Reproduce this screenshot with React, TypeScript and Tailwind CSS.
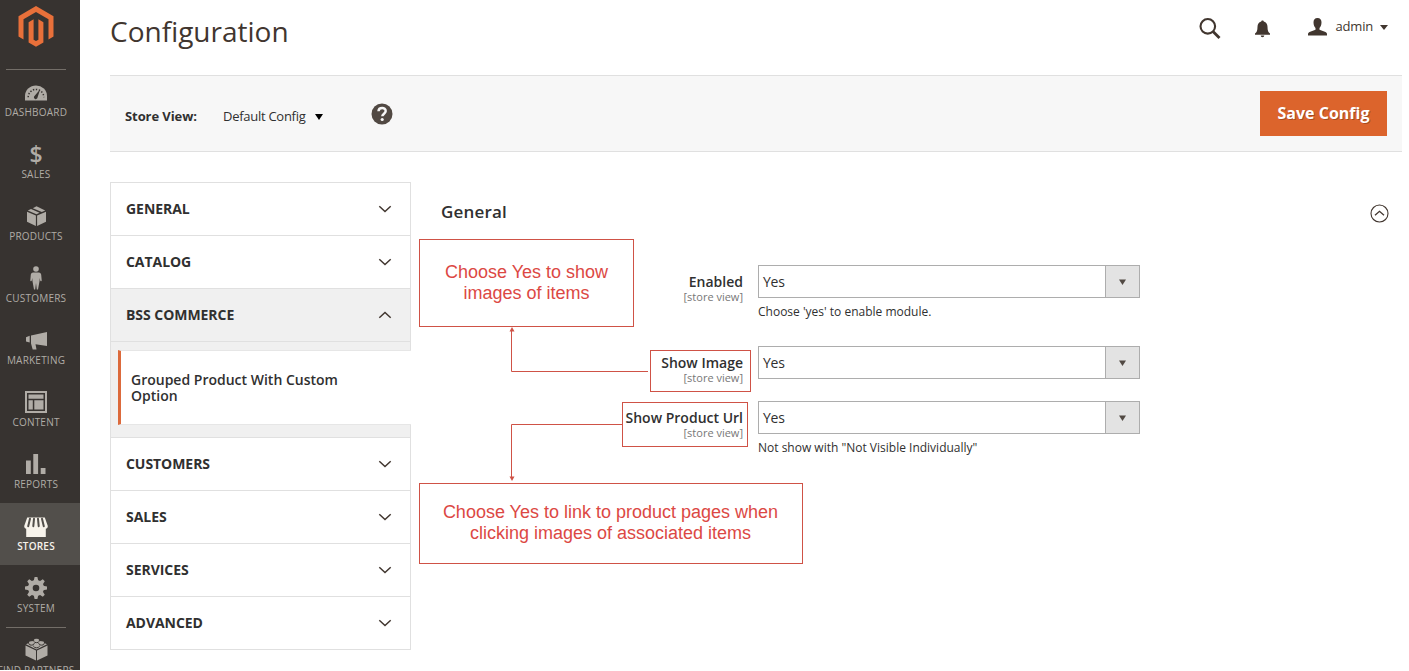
import React from "react";

const icons: Record<string, React.ReactNode> = {
  dashboard: (
    <svg width="22" height="16" viewBox="0 0 22 16">
      <path d="M0 15.5V11a11 10.5 0 0 1 22 0v4.5z" fill="currentColor" />
      <path d="M3.200 12.200a7.800 7.800 0 0 1 15.600 0" fill="none" stroke="#373330" strokeWidth="1.500" strokeDasharray="1.400 1.600" />
      <path d="M15.200 4.200l-2.700 8.200a1.800 1.800 0 1 1-3-1.400z" fill="#373330" />
    </svg>
  ),
  products: (
    <svg width="19" height="20" viewBox="0 0 19 20" fill="currentColor">
      <path d="M0 5.800l8.900 3.600V20L0 15.800z" />
      <path d="M19 5.800l-8.900 3.600V20l8.900-4.200z" />
      <path d="M.8 4.500l3.200-1.500 8.600 3.700-3.100 1.500z" />
      <path d="M5.800 2.200L9.500.3l8.700 4.200-3.400 1.400z" />
    </svg>
  ),
  customers: (
    <svg width="12" height="24" viewBox="0 0 12 24" fill="currentColor">
      <circle cx="6" cy="3" r="2.800" />
      <path d="M3.200 6.500h5.600c1.500 0 2.300 1 2.400 2.300l.5 5.400c.1 1.300-1.300 1.400-1.500.4L9.800 12l-.3 3.200L8 23.500H6.800L6 17l-.8 6.500H4L2.500 15.200 2.200 12l-.4 2.600c-.2 1-1.600.9-1.500-.4l.5-5.400C.9 7.500 1.700 6.500 3.200 6.500z" />
    </svg>
  ),
  marketing: (
    <svg width="21" height="18" viewBox="0 0 21 18" fill="currentColor">
      <path d="M21 0v14L9.500 12.200l1 5.300H6.700L5 11.600V3.400z" />
      <path d="M0 5.200l3.700-1.500v6.800L0 9.600z" />
    </svg>
  ),
  content: (
    <svg width="22" height="22" viewBox="0 0 22 22" fill="currentColor">
      <path d="M0 0h22v22H0zM2 2v18h18V2z" fillRule="evenodd" />
      <path d="M3.500 3.500h15v4.300h-15zM3.500 9.300h4.300v9.200H3.500zM9.300 9.300h9.200v9.200H9.300z" />
    </svg>
  ),
  reports: (
    <svg width="20" height="20" viewBox="0 0 20 20" fill="currentColor">
      <path d="M0 6.500h4.800V20H0zM7.300 0h4.800v20H7.300zM14.700 14h4.800v6h-4.800z" />
    </svg>
  ),
  stores: (
    <svg width="24" height="20" viewBox="0 0 24 20" fill="currentColor">
      <path d="M3.200.5h17.600l3 8.500c0 1.800-1 2.700-2 2.700V20H2.200v-8.300c-1 0-2-.9-2-2.700z" />
      <path d="M6 1.800L4.200 9.200M10 1.800L9.300 9.200M14 1.800l.7 7.400M18 1.800l1.800 7.400" stroke="#524f4b" strokeWidth="2" strokeLinecap="round" />
    </svg>
  ),
  system: (
    <svg width="22" height="22" viewBox="0 0 22 22">
      <g fill="currentColor">
        <path fillRule="evenodd" d="M11 3a8 8 0 1 0 0 16 8 8 0 0 0 0-16zm0 4.700a3.300 3.300 0 1 1 0 6.600 3.300 3.300 0 0 1 0-6.600z" />
        <path d="M8.700 4L9.600 0h2.800l.9 4zM8.700 18l.9 4h2.800l.9-4zM4 8.700L0 9.600v2.800l4 .9zM18 8.700l4 .9v2.800l-4 .9z" />
        <path d="M8.700 4L9.600 0h2.800l.9 4zM8.700 18l.9 4h2.800l.9-4zM4 8.700L0 9.600v2.800l4 .9zM18 8.700l4 .9v2.800l-4 .9z" transform="rotate(45 11 11)" />
      </g>
    </svg>
  ),
  partners: (
    <svg width="23" height="23" viewBox="0 0 23 23">
      <path d="M.5 7.500l10.500 4.900V22.500L.5 17.500zM22.500 7.500L12 12.400v10.100l10.500-5zM1 6.300L11.500 1.500 22 6.300l-10.500 5.200z" fill="currentColor" />
      <g fill="none" stroke="#373330" strokeWidth="1">
        <path d="M8.900 2.500v1c0 1.500 5.200 1.500 5.200 0v-1M3.900 5v1c0 1.500 5.200 1.500 5.200 0V5M13.900 5v1c0 1.500 5.200 1.500 5.200 0V5M8.900 7.700v1c0 1.500 5.200 1.500 5.200 0v-1" />
      </g>
      <g fill="currentColor">
        <ellipse cx="11.500" cy="2" rx="2.600" ry="1.300" />
        <ellipse cx="6.500" cy="4.600" rx="2.600" ry="1.300" />
        <ellipse cx="16.500" cy="4.600" rx="2.600" ry="1.300" />
        <ellipse cx="11.500" cy="7.400" rx="2.600" ry="1.300" />
      </g>
    </svg>
  ),
};

const menu = [
  ["dashboard", "DASHBOARD"],
  ["sales", "SALES"],
  ["products", "PRODUCTS"],
  ["customers", "CUSTOMERS"],
  ["marketing", "MARKETING"],
  ["content", "CONTENT"],
  ["reports", "REPORTS"],
  ["stores", "STORES"],
  ["system", "SYSTEM"],
];

function MenuItem({ id, label }: { id: string; label: string }) {
  const active = id === "stores";
  return (
    <div className={"flex h-[62px] w-20 shrink-0 flex-col items-center pr-2 " + (active ? "bg-[#524f4b] text-[#f7f3eb]" : "text-[#b0aca6]")}>
      <div className={"flex h-6 items-center justify-center " + (id === "marketing" || id === "dashboard" || id === "stores" ? "mt-3 -mb-px" : "mt-[11px]")}>
        {id === "sales" ? <span className="text-[23px] leading-6 font-semibold">$</span> : icons[id]}
      </div>
      <div className={"mt-px text-[10px] leading-[14px] whitespace-nowrap " + (active ? "font-semibold tracking-[0.2px]" : "font-medium tracking-[0.22px]")}>{label}</div>
    </div>
  );
}

function Sidebar() {
  return (
    <aside className="flex h-[670px] w-20 shrink-0 flex-col overflow-hidden bg-[#373330]">
      <div className="flex h-[69px] shrink-0 justify-center pt-1.5 pr-2">
        <svg width="36" height="41" viewBox="0 0 36 41" fill="#e8703a">
          <path d="M18 0l17.500 10.200v20.300l-5 2.900V13.200L18 5.900 5.500 13.200v20.200l-5-2.900V10.200z" />
          <path d="M10.600 16.200l5-2.900v20.400l2.400 1.400 2.400-1.400V13.300l5 2.900v20.200L18 40.700l-7.400-4.300z" />
        </svg>
      </div>
      <div className="-mb-px ml-1.5 h-px w-[60px] shrink-0 bg-[#736e68]" />
      {menu.map(([id, label]) => <MenuItem key={id} id={id} label={label} />)}
      <div className="ml-1.5 h-px w-[60px] shrink-0 bg-[#736e68]" />
      <div className="flex w-20 shrink-0 flex-col items-center pt-[10px] pr-2 text-[#b0aca6]">
        {icons.partners}
        <div className="mt-[2px] text-[10px] leading-[14px] font-medium tracking-[0.22px] whitespace-nowrap">FIND PARTNERS</div>
      </div>
    </aside>
  );
}

function Header() {
  return (
    <header className="flex h-[75px] items-start justify-between pr-[14px]">
      <h1 className="pt-3 text-[28px] leading-[38px] text-[#41362f]">Configuration</h1>
      <div className="flex items-center pt-4 text-[#41362f]">
        <svg className="mt-px mr-[34px]" width="22" height="22" viewBox="0 0 22 22" fill="none" stroke="currentColor">
          <circle cx="8.800" cy="9.300" r="7.300" strokeWidth="2.100" />
          <path d="M14 14.500l6.500 6.500" strokeWidth="2.800" />
        </svg>
        <svg className="mt-[3px] mr-[38px]" width="15" height="18" viewBox="0 0 15 18" fill="currentColor">
          <path d="M7.500.5c.9 0 1.200.5 1.300 1 2.500.7 3.700 2.700 3.700 5.300 0 4 .8 5.500 2.500 6.700v1.300H0v-1.300c1.700-1.200 2.500-2.700 2.500-6.700 0-2.600 1.200-4.600 3.700-5.300.1-.5.400-1 1.300-1z" />
          <path d="M5.700 15.500h3.600a1.800 1.800 0 0 1-3.600 0z" />
        </svg>
        <svg className="-mt-[2px]" width="19" height="18" viewBox="0 0 19 18" fill="currentColor">
          <path d="M9.500 0c2.700 0 4 1.700 4 4.200 0 2.800-.9 4.600-2 5.800v1.700l6 2.300c1 .4 1.500 1.300 1.500 2.300V17.500H0v-1.200c0-1 .5-1.900 1.500-2.300l6-2.300V10c-1.100-1.200-2-3-2-5.800C5.500 1.700 6.800 0 9.500 0z" />
        </svg>
        <span className="-mt-[3px] ml-[9px] text-[13px] leading-5 tracking-[-0.2px]">admin</span>
        <svg className="ml-[7px]" width="8" height="5" viewBox="0 0 8 5"><path d="M0 0h8L4 5z" fill="currentColor" /></svg>
      </div>
    </header>
  );
}

function Toolbar() {
  return (
    <div className="flex h-[77px] items-center border-y border-[#e0e0e0] bg-[#f7f7f7] pr-[15px] pl-[15px]">
      <span className="mt-[4px] w-[98px] text-[13px] leading-5 font-bold tracking-[-0.08px] text-[#303030]">Store View:</span>
      <span className="mt-[4px] text-[13px] leading-5 tracking-[-0.27px] text-[#303030]">Default Config</span>
      <svg className="mt-1.5 ml-[9px]" width="8" height="6" viewBox="0 0 8 6"><path d="M0 0h8L4 6z" fill="#000" /></svg>
      <svg className="ml-12" width="22" height="22" viewBox="0 0 22 22">
        <circle cx="11" cy="11" r="10.500" fill="#514943" />
        <path d="M7.500 8.300c.2-4.300 7.300-4.200 7.200-.2 0 2.500-3.300 2.700-3.400 5.200" fill="none" stroke="#f7f7f7" strokeWidth="2.500" />
        <circle cx="11.200" cy="16.500" r="1.600" fill="#f7f7f7" />
      </svg>
      <button className="ml-auto h-[45px] w-[127px] bg-[#dc642c] pb-0.5 text-[16px] leading-[42px] font-bold text-white [text-shadow:1px_1px_0_rgba(0,0,0,0.25)]">Save Config</button>
    </div>
  );
}

function Chevron({ up = false }: { up?: boolean }) {
  return (
    <svg width="14" height="8" viewBox="0 0 14 8" fill="none" stroke="#41362f" strokeWidth="1.500">
      <path d={up ? "M1.300 6.800L7 1.500l5.700 5.300" : "M1.300 1.200L7 6.500l5.700-5.300"} />
    </svg>
  );
}

function NavItem({ label, open = false }: { label: string; open?: boolean }) {
  return (
    <div className={"flex h-[53px] items-center justify-between border-t border-[#e0e0e0] pr-[18px] pl-[15px] " + (open ? "bg-[#f0f0f0]" : "")}>
      <span className="text-[14px] leading-5 font-bold tracking-[-0.05px] text-[#303030]">{label}</span>
      <Chevron up={open} />
    </div>
  );
}

function ConfigNav() {
  return (
    <nav className="w-[301px] shrink-0 self-start border-x border-b border-[#e0e0e0]">
      <NavItem label="GENERAL" />
      <NavItem label="CATALOG" />
      <NavItem label="BSS COMMERCE" open />
      <div className="border-t border-[#e0e0e0] bg-[#f0f0f0] pt-2 pb-3 pl-[7px]">
        <div className="-mr-px flex h-[75px] items-center border-y border-l-[3px] border-y-[#e6e6e6] border-l-[#dc6a3c] bg-white pl-[10px] text-[14px] leading-4 font-semibold text-[#303030]">
          <span className="mt-px w-[230px]">Grouped Product With Custom Option</span>
        </div>
      </div>
      <NavItem label="CUSTOMERS" />
      <NavItem label="SALES" />
      <NavItem label="SERVICES" />
      <NavItem label="ADVANCED" />
    </nav>
  );
}

function Field({ label, note, className }: { label: string; note?: string; className: string }) {
  return (
    <div className={"flex gap-[15px] " + className}>
      <div className="w-[302px] pt-[7px] text-right">
        <div className="text-[14px] leading-5 font-semibold text-[#303030]">{label}</div>
        <div className="-mt-[2px] text-[11px] leading-[14px] text-[#777]">[store view]</div>
      </div>
      <div className="w-[382px]">
        <div className="flex h-[33px] border border-[#adadad] bg-white">
          <span className="flex-1 pl-1 text-[14px] leading-[32px] tracking-[-0.25px] text-[#303030]">Yes</span>
          <span className="flex w-[34px] items-center justify-center border-l border-[#adadad] bg-[#e3e3e3]">
            <svg width="7" height="6" viewBox="0 0 7 6"><path d="M0 .5h7L3.500 6z" fill="#514943" /></svg>
          </span>
        </div>
        {note && <div className="mt-1 text-[12px] leading-5 text-[#303030]">{note}</div>}
      </div>
    </div>
  );
}

function Annotations() {
  return (
    <div className="font-['Liberation_Sans',Arial,sans-serif] text-[18px] leading-[21px] text-[#dc4844]">
      <div className="absolute top-[239px] left-[419px] flex h-[88px] w-[215px] items-center justify-center border border-[#cf5246] text-center whitespace-nowrap">
        Choose Yes to show<br />images of items
      </div>
      <div className="absolute top-[483px] left-[419px] flex h-[81px] w-[384px] items-center justify-center border border-[#cf5246] pr-px pb-[2px] text-center whitespace-nowrap">
        Choose Yes to link to product pages when<br />clicking images of associated items
      </div>
      <div className="absolute top-[350px] left-[650px] h-[42px] w-[101px] border border-[#cf5246]" />
      <div className="absolute top-[402px] left-[622px] h-[45px] w-[126px] border border-[#cf5246]" />
      <svg className="absolute top-[327px] left-[505px]" width="145" height="156" viewBox="0 0 145 156" fill="none" stroke="#cf5246">
        <path d="M6.500 3v41.500H143" />
        <path d="M117 97.500H6.500V151" />
        <path d="M7 0l2.500 4.500h-5zM7 154l2.500-4.500h-5z" fill="#cf5246" stroke="none" />
      </svg>
    </div>
  );
}

export default function App() {
  return (
    <div className="relative flex h-[671px] w-[1409px] overflow-hidden bg-white font-['Open_Sans',sans-serif]">
      <Sidebar />
      <main className="flex w-[1322px] flex-col pl-[30px]">
        <Header />
        <Toolbar />
        <div className="flex pt-[30px]">
          <ConfigNav />
          <section className="flex-1 pl-[30px]">
            <div className="flex h-[83px] items-start justify-between pr-[13px]">
              <h2 className="pt-[18px] text-[17px] leading-6 font-semibold tracking-[0.2px] text-[#303030]">General</h2>
              <svg className="mt-[22px]" width="19" height="19" viewBox="0 0 19 19" fill="none" stroke="#41362f" strokeWidth="1.100">
                <circle cx="9.500" cy="9.500" r="8.500" />
                <path d="M5 11.300l4.500-4 4.500 4" strokeWidth="1.300" />
              </svg>
            </div>
            <Field label="Enabled" note="Choose 'yes' to enable module." className="h-[81px]" />
            <Field label="Show Image" className="h-[55px]" />
            <Field label="Show Product Url" note={'Not show with "Not Visible Individually"'} className="h-[60px]" />
          </section>
        </div>
      </main>
      <Annotations />
    </div>
  );
}
